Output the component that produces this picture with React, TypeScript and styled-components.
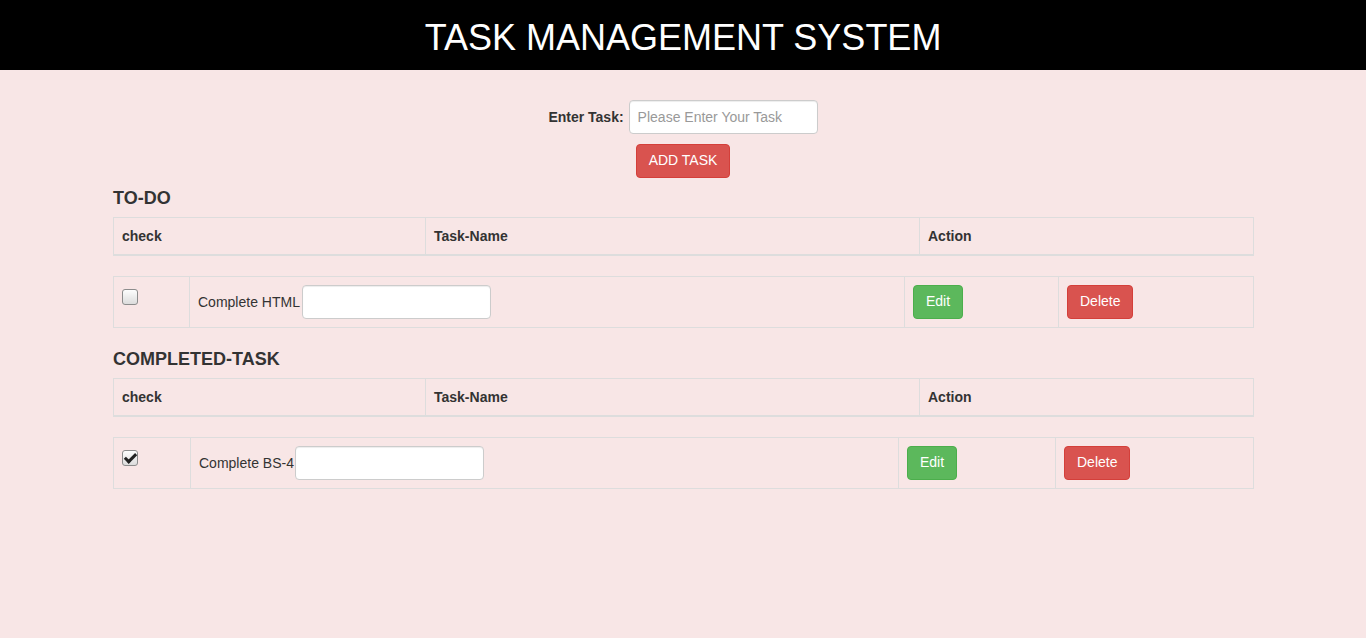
import React from "react";
import styled, { createGlobalStyle } from "styled-components";

const Global = createGlobalStyle`
  html, body { margin: 0; padding: 0; }
  body {
    background: #f8e6e6;
    font-family: "Liberation Sans", Arial, sans-serif;
    font-size: 14px;
    line-height: 1.42857;
    color: #333;
  }
  * { box-sizing: border-box; }
`;

const Header = styled.header`
  background: #000;
  height: 70px;
  display: flex;
  align-items: center;
  justify-content: center;
`;

const Title = styled.h1`
  margin: 6px 0 0;
  color: #fff;
  font-weight: 400;
  font-size: 36px;
  line-height: 1;
`;

const Container = styled.main`
  width: 1140px;
  margin: 0 auto;
`;

const Form = styled.form`
  display: flex;
  flex-direction: column;
  align-items: center;
  padding-top: 30px;
  gap: 10px;
`;

const FormRow = styled.div`
  display: flex;
  align-items: center;
  gap: 5px;
`;

const Label = styled.label`
  font-weight: 700;
  padding-top: 1px;
`;

const TextInput = styled.input<{ $w?: number; $ml?: number }>`
  width: ${(p) => p.$w ?? 189}px;
  height: 34px;
  margin: 0 0 0 ${(p) => p.$ml ?? 0}px;
  padding: 6px 8px;
  font-family: inherit;
  font-size: 14px;
  color: #555;
  background: #fff;
  border: 1px solid #ccc;
  border-radius: 4px;
  box-shadow: inset 0 1px 1px rgba(0, 0, 0, 0.075);
  vertical-align: middle;
  &::placeholder { color: #999; }
`;

const Button = styled.button<{ $variant: "danger" | "success" }>`
  height: 34px;
  padding: 6px 12px;
  font-family: inherit;
  font-size: 14px;
  line-height: 1.42857;
  color: #fff;
  border-radius: 4px;
  cursor: pointer;
  background: ${(p) => (p.$variant === "danger" ? "#d9534f" : "#5cb85c")};
  border: 1px solid ${(p) => (p.$variant === "danger" ? "#d43f3a" : "#4cae4c")};
`;

const SectionTitle = styled.h4<{ $top: number; $bottom: number }>`
  margin: ${(p) => p.$top}px 0 ${(p) => p.$bottom}px;
  font-size: 18px;
  font-weight: 700;
  line-height: 1.1;
`;

const Table = styled.table`
  width: 100%;
  border-collapse: collapse;
  border-spacing: 0;
  border: 1px solid #ddd;
  margin-bottom: 20px;
  table-layout: fixed;
`;

const Th = styled.th<{ $w: number }>`
  width: ${(p) => p.$w}px;
  text-align: left;
  padding: 8px;
  line-height: 20px;
  font-weight: 700;
  border: 1px solid #ddd;
  border-bottom: 2px solid #ddd;
  vertical-align: bottom;
`;

const Td = styled.td<{ $w: number }>`
  width: ${(p) => p.$w}px;
  padding: 8px;
  line-height: 20px;
  border: 1px solid #ddd;
  vertical-align: top;
`;

const Check = styled.input`
  appearance: none;
  -webkit-appearance: none;
  width: 16px;
  height: 16px;
  margin: 4px 0 0 0;
  display: block;
  border: 1px solid #8c8c8c;
  border-radius: 3px;
  background: linear-gradient(#fdfdfd, #dcdcdc);
  position: relative;
  &:checked::after {
    content: "";
    position: absolute;
    left: 4px;
    top: 0px;
    width: 4px;
    height: 9px;
    border: solid #222;
    border-width: 0 3px 3px 0;
    transform: rotate(45deg);
  }
`;

const TaskName = styled.span`
  vertical-align: middle;
`;

type TaskRowProps = {
  name: string;
  done: boolean;
  widths: [number, number, number, number];
  inputOffset: number;
};

const TaskTable = ({ name, done, widths, inputOffset }: TaskRowProps) => (
  <Table>
    <tbody>
      <tr>
        <Td $w={widths[0]}>
          <Check type="checkbox" defaultChecked={done} />
        </Td>
        <Td $w={widths[1]}>
          <TaskName>{name}</TaskName>
          <TextInput type="text" $ml={inputOffset} />
        </Td>
        <Td $w={widths[2]}>
          <Button $variant="success" type="button">Edit</Button>
        </Td>
        <Td $w={widths[3]}>
          <Button $variant="danger" type="button">Delete</Button>
        </Td>
      </tr>
    </tbody>
  </Table>
);

const HeadTable = () => (
  <Table>
    <thead>
      <tr>
        <Th $w={312}>check</Th>
        <Th $w={494}>Task-Name</Th>
        <Th $w={334}>Action</Th>
      </tr>
    </thead>
  </Table>
);

export default function App() {
  return (
    <>
      <Global />
      <Header>
        <Title>TASK MANAGEMENT SYSTEM</Title>
      </Header>
      <Container>
        <Form onSubmit={(e) => e.preventDefault()}>
          <FormRow>
            <Label htmlFor="task">Enter Task:</Label>
            <TextInput id="task" type="text" placeholder="Please Enter Your Task" />
          </FormRow>
          <Button $variant="danger" type="submit">ADD TASK</Button>
        </Form>
        <SectionTitle $top={11} $bottom={8}>TO-DO</SectionTitle>
        <HeadTable />
        <TaskTable name="Complete HTML" done={false} widths={[76, 715, 154, 195]} inputOffset={2} />
        <SectionTitle $top={22} $bottom={8}>COMPLETED-TASK</SectionTitle>
        <HeadTable />
        <TaskTable name="Complete BS-4" done={true} widths={[77, 708, 157, 198]} inputOffset={1} />
      </Container>
    </>
  );
}
